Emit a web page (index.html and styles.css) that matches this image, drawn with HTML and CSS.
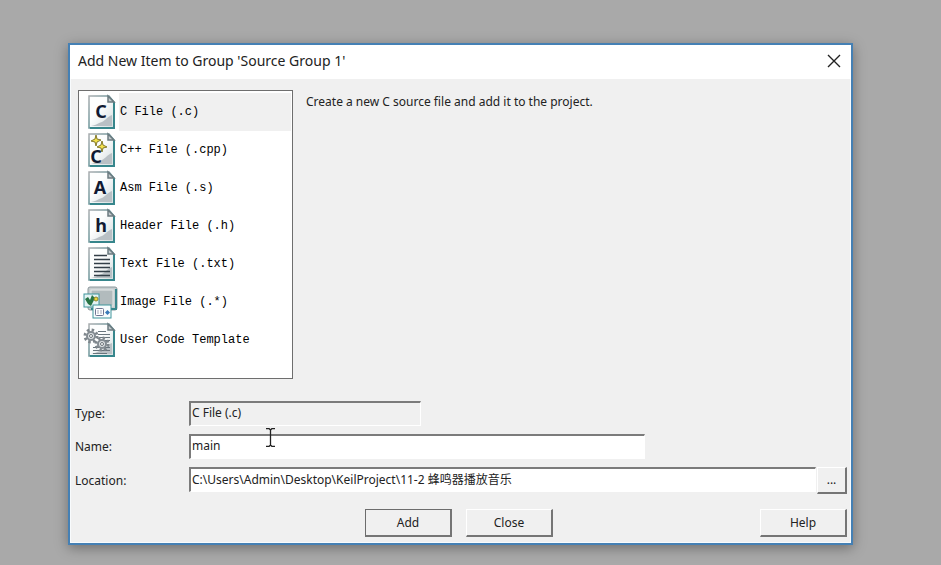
FILE: index.html
```
<!DOCTYPE html>
<html lang="en">
<head>
  <meta charset="UTF-8">
  <title>Add New Item to Group</title>
  <meta name="viewport" content="width=device-width, initial-scale=1.0">
  <link rel="stylesheet" href="styles.css">
</head>
<body>
  <!-- shared icon parts -->
  <svg class="defs" width="0" height="0" aria-hidden="true">
    <defs>
      <linearGradient id="paper" x1="0" y1="0" x2="1" y2="1">
        <stop offset="0.4" stop-color="#fdfefe"/>
        <stop offset="1" stop-color="#d3dbdd"/>
      </linearGradient>
      <linearGradient id="edge" x1="0" y1="0" x2="1" y2="1">
        <stop offset="0" stop-color="#a9adb0"/>
        <stop offset="1" stop-color="#2f7f86"/>
      </linearGradient>
      <g id="page">
        <path d="M6 2H26L31 8V34H6Z" fill="url(#paper)" stroke="url(#edge)" stroke-width="1.5"/>
        <path d="M8 32C15 31 14 29 19 28C23 26 24 23 29 21V32Z" fill="#b9c0c5"/>
        <path d="M31 8V34H7" fill="none" stroke="#37868c" stroke-width="2"/>
        <path d="M25 2V8H31Z" fill="#c5cbce" stroke="#6b7b80" stroke-width="1.5"/>
      </g>
      <g id="gear">
        <circle r="6" fill="none" stroke="#7e868c" stroke-width="3" stroke-dasharray="2.4 2.3"/>
        <circle r="4" fill="#dfe3e5" stroke="#848c92" stroke-width="2"/>
        <circle r="1.5" fill="#fff" stroke="#6d757b"/>
      </g>
    </defs>
  </svg>

  <main class="dialog" role="dialog" aria-labelledby="title">
    <header class="titlebar">
      <h1 id="title">Add New Item to Group 'Source Group 1'</h1>
      <button class="close-x" type="button" aria-label="Close window">
        <svg width="14" height="14" viewBox="0 0 14 14"><path d="M1 1L13 13M13 1L1 13" stroke="#222" stroke-width="1.4"/></svg>
      </button>
    </header>

    <div class="content">
      <div class="top">
        <ul class="types">
          <li class="selected">
            <svg class="icon" viewBox="0 0 36 36"><use href="#page"/><text class="letter" x="18" y="24">C</text></svg>
            <span>C File (.c)</span>
          </li>
          <li>
            <svg class="icon" viewBox="0 0 36 36"><use href="#page"/>
              <path d="M13 3L14 7L18 8L14 10L13 14L12 10L8 9L12 7Z" fill="#f2e04a" stroke="#857a2a"/>
              <path d="M19 9L20 13L24 15L20 16L19 20L18 16L14 15L18 13Z" fill="#f2e04a" stroke="#857a2a"/>
              <text class="letter" x="13" y="31">C</text></svg>
            <span>C++ File (.cpp)</span>
          </li>
          <li>
            <svg class="icon" viewBox="0 0 36 36"><use href="#page"/><text class="letter" x="17" y="24">A</text></svg>
            <span>Asm File (.s)</span>
          </li>
          <li>
            <svg class="icon" viewBox="0 0 36 36"><use href="#page"/><text class="letter" x="18" y="24">h</text></svg>
            <span>Header File (.h)</span>
          </li>
          <li>
            <svg class="icon" viewBox="0 0 36 36"><use href="#page"/>
              <path d="M11 9.5H24M11 13.5H27M11 17.5H27M11 21.5H27M11 25.5H27M11 29.5H27" stroke="#333f48" stroke-width="1.6"/></svg>
            <span>Text File (.txt)</span>
          </li>
          <li>
            <svg class="icon" viewBox="0 0 36 36">
              <rect x="5" y="3" width="29" height="23" rx="2" fill="#c6cdcf" stroke="#8b979b"/>
              <path d="M33 5V25H8" fill="none" stroke="#37868c" stroke-width="2"/>
              <rect x="8" y="6" width="22" height="16" fill="#b2bbbd" stroke="#e5e9e9"/>
              <rect x="1" y="10" width="15" height="13" fill="#e4f3f4" stroke="#3e959b"/>
              <path d="M2 15L5 13L7 16L9 11L12 14L10 18L8 22L5 20Z" fill="#287445"/>
              <circle cx="13" cy="15" r="2" fill="#e8d838" stroke="#8c812d"/>
              <rect x="10" y="21" width="18" height="13" fill="#f7fcfd" stroke="#3e959b"/>
              <rect x="12.5" y="24.5" width="8" height="7" rx="1" fill="#fff" stroke="#6e7592"/>
              <path d="M15 26V30M18 26V30" stroke="#a4a9bb"/>
              <path d="M24.5 26L27 28.5L24.5 31L22 28.5Z" fill="#3979b8"/></svg>
            <span>Image File (.*)</span>
          </li>
          <li>
            <svg class="icon" viewBox="0 0 36 36"><use href="#page"/>
              <path d="M15 9.5H23M15 12.5H27M17 15.5H27M17 18.5H27M10 25.5H27M10 28.5H27M10 31.5H24" stroke="#69757d"/>
              <use href="#gear" x="8" y="14"/><use href="#gear" x="19" y="22"/></svg>
            <span>User Code Template</span>
          </li>
        </ul>
        <p class="description">Create a new C source file and add it to the project.</p>
      </div>

      <form class="fields">
        <label for="type">Type:</label>
        <input class="type" id="type" type="text" value="C File (.c)" readonly>

        <label for="name">Name:</label>
        <input class="name" id="name" type="text" value="main">

        <label for="location">Location:</label>
        <div class="location">
          <input id="location" type="text" value="C:\Users\Admin\Desktop\KeilProject\11-2 蜂鸣器播放音乐">
          <button class="btn browse" type="button" aria-label="Browse">...</button>
        </div>
        <svg class="cursor" width="9" height="19" viewBox="0 0 9 19" aria-hidden="true"><path d="M0 .5H3L4.5 2L6 .5H9M4.5 2V17M0 18.5H3L4.5 17L6 18.5H9" fill="none" stroke="#222" stroke-width="1.3"/></svg>
      </form>

      <footer class="actions">
        <button class="btn default" type="button">Add</button>
        <button class="btn" type="button">Close</button>
        <button class="btn help" type="button">Help</button>
      </footer>
    </div>
  </main>
</body>
</html>
```
FILE: styles.css
```
* {
  box-sizing: border-box;
}

body {
  margin: 0;
  padding: 43px 88px 21px 68px;
  background-color: #a9a9a9;
  color: #222;
  font-family: "Noto Sans", "Noto Sans CJK SC", sans-serif;
  font-size: 12px;
  line-height: 16px;
}

.defs {
  position: absolute;
}

.dialog {
  border: 2px solid #4580b4;
  background-color: #f0f0f0;
  box-shadow: 0 3px 12px rgba(0, 0, 0, 0.35);
}

.titlebar {
  display: flex;
  align-items: center;
  justify-content: space-between;
  height: 34px;
  padding: 0 10px 2px 8px;
  background-color: #fff;
}

.titlebar h1 {
  margin: 0;
  font-size: 14px;
  font-weight: normal;
}

.close-x {
  display: flex;
  padding: 0;
  border: none;
  background: none;
}

.content {
  padding: 11px 3px 5px 4px;
  border: solid #f8fbfd;
  border-width: 0 1px 1px;
}

.top {
  display: flex;
  gap: 13px;
  padding-left: 3px;
}

.types {
  flex: none;
  width: 215px;
  height: 289px;
  margin: 0;
  padding: 2px 1px;
  border: 1px solid #6e6e6e;
  background-color: #fff;
  list-style: none;
  font-family: "Liberation Mono", monospace;
  color: #000;
}

.types li {
  display: flex;
  align-items: center;
  height: 38px;
  padding-left: 3px;
}

.types span {
  flex: 1;
  padding-left: 1px;
  line-height: 38px;
}

.selected span {
  background-color: #f0f0f0;
}

.icon {
  flex: none;
  width: 36px;
  height: 36px;
}

.letter {
  fill: #111a33;
  font-family: "Noto Sans", sans-serif;
  font-size: 18px;
  font-weight: bold;
  text-anchor: middle;
}

.description {
  margin: 4px 0 0;
}

.fields {
  position: relative;
  display: grid;
  grid-template-columns: 114px 1fr;
  row-gap: 8px;
  align-items: center;
  margin-top: 22px;
}

.fields input {
  height: 25px;
  padding: 0 2px 3px 1px;
  border: 1px solid #fff;
  border-top: 2px solid #7b7b7b;
  border-left: 2px solid #7b7b7b;
  background-color: #fff;
  color: #222;
  font: inherit;
}

.fields .type {
  width: 232px;
  background-color: #f0f0f0;
}

.fields .name {
  width: 456px;
}

.location {
  display: flex;
  gap: 1px;
}

.location input {
  flex: 1;
  min-width: 0;
}

.cursor {
  position: absolute;
  left: 191px;
  top: 27px;
}

.actions {
  display: flex;
  gap: 14px;
  margin-top: 15px;
  padding-left: 290px;
}

.btn {
  width: 87px;
  height: 28px;
  padding: 0;
  border: 1px solid #fff;
  border-right: 2px solid #757575;
  border-bottom: 2px solid #757575;
  background-color: #f0f0f0;
  color: #222;
  font: inherit;
}

.btn.default {
  border-top-color: #6c6c6c;
  border-left-color: #6c6c6c;
}

.btn.browse {
  width: 30px;
  height: 27px;
}

.btn.help {
  margin-left: auto;
}
```
